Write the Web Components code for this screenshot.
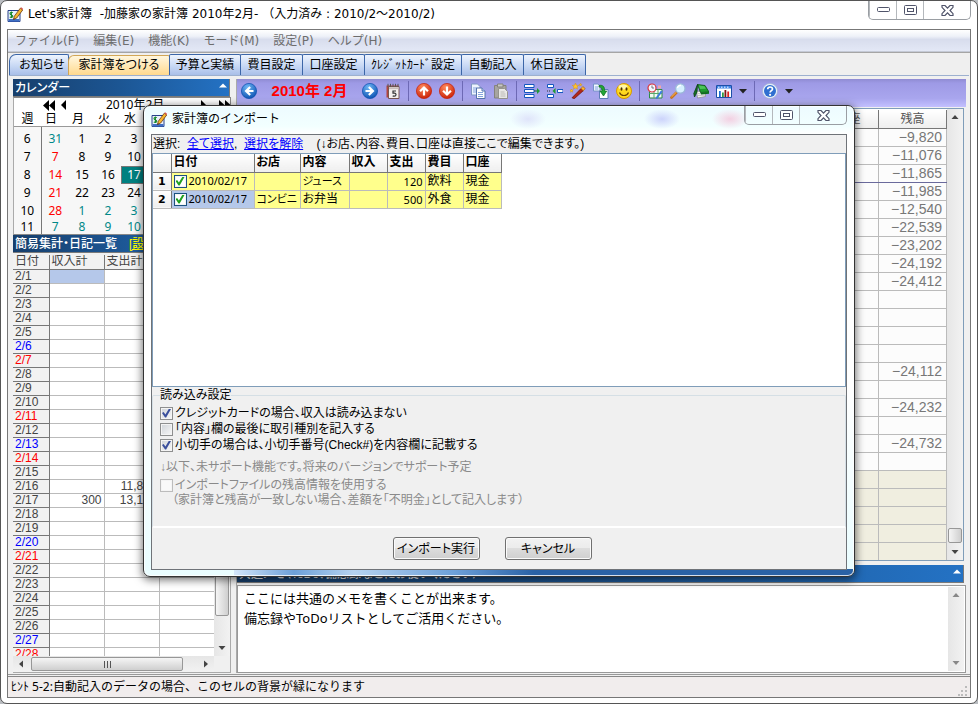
<!DOCTYPE html>
<html lang="ja">
<head>
<meta charset="utf-8">
<title>Let's家計簿</title>
<style>
  html, body { height: 100%; }
  body {
    margin: 0;
    background: #b9bcc0;
    --ui: "DejaVu Sans", "Noto Sans CJK JP", sans-serif;
    --gothic: "Liberation Sans", "Noto Sans CJK JP", sans-serif;
    --num: "Noto Sans", "Noto Sans CJK JP", sans-serif;
    font: 12px/16px var(--gothic);
    color: #000;
    overflow: hidden;
  }
</style>
</head>
<body>
<app-window></app-window>
<script>
const define = (name, html, after) => {
  const t = document.createElement('template');
  t.innerHTML = `<style>*{box-sizing:border-box}button{font:inherit;color:inherit;border:0;padding:0;margin:0;background:none}:host{box-sizing:border-box}</style>` + html;
  customElements.define(name, class extends HTMLElement {
    constructor() {
      super();
      this.attachShadow({ mode: 'open' }).append(t.content.cloneNode(true));
    }
    connectedCallback() { if (after) after(this, this.shadowRoot); }
  });
};

/* ---------- icons ---------- */
const disc = (id, a, b, arrow) => `<defs><radialGradient id="${id}" cx=".4" cy=".25" r=".8"><stop offset="0" stop-color="${a}"/><stop offset="1" stop-color="${b}"/></radialGradient></defs><circle cx="8" cy="8" r="7.6" fill="url(#${id})" stroke="${b}" stroke-width=".7"/><path d="${arrow}" fill="#fff"/>`;
const ICONS = {
  app: `<path d="M1 3.5h12v11H1z" fill="#e9f1fb" stroke="#27408b"/><path d="M1.500 12h11v2.500h-11z" fill="#3f6fc4"/><path d="M5.800 5.700C5 4.900 3 5.200 3 6.600c0 1.600 2.800 1 2.800 2.700 0 1.300-2.100 1.500-3 .600M4.400 4.500v6.500" fill="none" stroke="#168a2c" stroke-width="1.100"/><path d="M6.500 12.500l.8-3.300 6-8 2.400 1.800-6 8z" fill="#f7b52e" stroke="#6b3a10" stroke-width=".8"/><path d="M13.300 1.200l.8-.9 2 1.500-.5 1.200z" fill="#d9534a"/><path d="M6.500 12.500l.3-1.300 1 .7z" fill="#222"/>`,
  left: disc('a', '#6fb7f5', '#0a4fb0', 'M8.400 3.300L3.500 8l4.900 4.700 1.500-1.500L7.800 9.100h4.700V6.900H7.800l2.100-2.100z'),
  right: disc('b', '#6fb7f5', '#0a4fb0', 'M7.600 3.300L12.500 8l-4.900 4.700-1.500-1.500 2.100-2.100H3.500V6.900h4.700L6.100 4.800z'),
  up: disc('c', '#ff8a5c', '#c81e06', 'M3.300 7.600L8 2.900l4.700 4.700-1.500 1.500-2.100-2.100v5.500H6.900V7L4.800 9.100z'),
  down: disc('d', '#ff8a5c', '#c81e06', 'M3.300 8.400L8 13.100l4.700-4.700-1.500-1.500L9.100 9V3.500H6.900V9L4.800 6.900z'),
  cal: `<path d="M1.500 2.500h12v12h-12z" fill="#b3453c"/><path d="M3.500 3.500h10.500v12H3.500z" fill="#f4f0ee" stroke="#7a5650"/><path d="M4 4.200h9.500v2H4z" fill="#c8bdb9"/><path d="M3 .8v3M5.500.8v3M8 .8v3M10.500.8v3M13 .8v3" stroke="#555"/><path d="M11 8H8v2.200h1.500c2 0 2 3-.2 3-.8 0-1.200-.2-1.600-.5" fill="none" stroke="#333" stroke-width="1.200"/>`,
  copy: `<path d="M1.500 1h6l2.500 2.500V12H1.500z" fill="#eef4fd" stroke="#7f97c2"/><path d="M3 5h4M3 7h3M3 9h3" stroke="#86a5dd"/><path d="M6.500 5h5.500l3 3v7.500H6.500z" fill="#fff" stroke="#5674ae"/><path d="M12 5v3h3" fill="#c4d6f5" stroke="#5674ae"/><path d="M8 9.500h5M8 11.500h5M8 13.500h5" stroke="#86a5dd"/>`,
  paste: `<path d="M1.500 2.500h11.500v12.500h-11.500z" fill="#a7a5a0" stroke="#85837e"/><path d="M4.500 1h5.500v3H4.500z" fill="#c9c8c5" stroke="#85837e"/><path d="M5.500 5.500h6l3 3v7H5.500z" fill="#e9e8e6" stroke="#96948f"/><path d="M7.500 9h4M7.500 11h5M7.500 13h5" stroke="#bcbab6"/>`,
  rowadd: `<path d="M.5 1.500h9.500v3H.5zM.5 6.500h9.500v3H.5zM.5 11.500h9.500v3H.5z" fill="#fff" stroke="#1557c0"/><path d="M10 8h3" stroke="#176b2a"/><path d="M13 5l3 3-3 3z" fill="#1f9a35"/>`,
  rowdel: `<path d="M.5 1.500h6v3h-6zM.5 11.500h6v3h-6z" fill="#fff" stroke="#1557c0"/><path d="M10.500 6.500h5.500v3h-5.500z" fill="#fff" stroke="#1557c0"/><path d="M8.500 5v6L5.500 8z" fill="#1f9a35"/><path d="M0 8h4" stroke="#333" stroke-dasharray="1 1"/>`,
  wand: `<path d="M2 14.800L11 5.500l2.300 2.200-9 8z" fill="#b3271a" stroke="#6b1208" stroke-width=".7"/><path d="M11 5.500l1.800-2 2.400 2-1.900 2.200z" fill="#ffb52b" stroke="#a35800" stroke-width=".6"/><path d="M5.500 0l.9 2.200 2.300.2-1.700 1.500.5 2.300-2-1.200-2 1.200.5-2.300L2.300 2.400l2.300-.2zM1.500 6l.5 1.100 1.200.1-.9.800.3 1.200-1.100-.6-1 .6.200-1.200-.8-.8 1.100-.1zM10.500.3l.4 1 1 .1-.7.700.2 1-.9-.5-.9.500.2-1-.7-.7 1-.1z" fill="#ffc629" stroke="#d68700" stroke-width=".4"/>`,
  imp: `<path d="M.5 1h4.500l2 2v5H.5z" fill="#f3f8ff" stroke="#7794c8"/><path d="M1.800 4h3.500M1.800 6h3.500" stroke="#7ca0df"/><path d="M8 6.500h7v9H6.500V8z" fill="#fff" stroke="#5f7fb8"/><path d="M6 2.500c4-1 6 1.500 5.500 5.500h2.200L10.500 13 7 8h2c.3-2.500-.8-4-3-4z" fill="#23a536" stroke="#0c6b1b" stroke-width=".7"/>`,
  smile: `<circle cx="8" cy="8" r="7.500" fill="#ffd91f" stroke="#d79a00"/><ellipse cx="7" cy="4" rx="4.500" ry="2.500" fill="#fff6a8"/><ellipse cx="5.500" cy="6" rx="1" ry="1.800" fill="#4a3000"/><ellipse cx="10.500" cy="6" rx="1" ry="1.800" fill="#4a3000"/><path d="M3.500 9.500c1.500 4 7.500 4 9 0" fill="none" stroke="#6b4200" stroke-width="1.200"/>`,
  find: `<path d="M2.500 6.500h12.500v8.500H2.500z" fill="#f2fbf2" stroke="#2e8b46"/><path d="M2.500 10.500h12.500M7 6.500V15M11 6.500V15" stroke="#58a86c"/><path d="M8.500 15L14 7.500l1.500 1.200L10 16z" fill="#3b7be0"/><circle cx="5" cy="5" r="4" fill="#f4f8ff" stroke="#d8343c" stroke-width="1.200"/><path d="M5 2.500V5h2" stroke="#777" fill="none"/><path d="M11 2.500h3v3h-3z" fill="#f3a6a6"/>`,
  lens: `<path d="M1.500 14.500L6.500 9.500" stroke="#c8731a" stroke-width="2.600" stroke-linecap="round"/><path d="M1.500 13.900L6.500 9" stroke="#ffc06b" stroke-width=".9"/><circle cx="10.300" cy="5.500" r="4.700" fill="#d6f0ff" stroke="#9bb8d8" stroke-width="1.300"/><path d="M7.500 5a3 3 0 013.500-2.500" stroke="#fff" stroke-width="1.400" fill="none"/>`,
  book: `<path d="M3.500 8l1 7 8-1.500V9z" fill="#f3f3f3" stroke="#888" stroke-width=".7"/><path d="M4.500 10.500l7.500.5M4.700 12.500l7.300-.2" stroke="#aaa" stroke-width=".6"/><path d="M4.500 1.500L12 2.500l4 6.500-8.500.5z" fill="#1e9a2f" stroke="#0b4f16" stroke-width=".8"/><path d="M6 2.500l5.500.8 1.500 2.400-6 .3z" fill="#4cc45a"/><path d="M4.500 1.500L.8 10.500l.7 3.500L4 9z" fill="#157324" stroke="#0b3f12" stroke-width=".8"/><path d="M7.500 9.500L16 9v1.800l-8 .7z" fill="#0e6e1d"/>`,
  chart: `<path d="M.5 2.500h15v12H.5z" fill="#fff" stroke="#1d4fa8"/><path d="M1 3h14v2.500H1z" fill="#3d83e6"/><path d="M2 4.200h1.500M5 4.200h1.500M8 4.200h1.500M11 4.200h1.500" stroke="#fff"/><path d="M3 8h1.800v6H3z" fill="#1d6fd6"/><path d="M6 9.500h1.800V14H6z" fill="#2f9b44"/><path d="M8.500 7h1.800v7H8.500z" fill="#7a1414"/><path d="M11.300 8.500h1.800V14h-1.800z" fill="#d22"/>`,
  help: `<circle cx="8" cy="8" r="7.600" fill="#e8eef9" stroke="#9fb2d6" stroke-width=".7"/><circle cx="8" cy="8" r="6" fill="#2f6fd0"/><path d="M5.700 6.300C5.700 3.300 10.500 3.300 10.500 6c0 1.700-2.400 1.700-2.400 3.600" fill="none" stroke="#fff" stroke-width="1.700"/><circle cx="8.100" cy="11.800" r="1.100" fill="#fff"/>`,
};
define('ui-icon', `<style>:host{display:block;width:16px;height:16px;flex:none}svg{display:block;width:100%;height:100%}</style><svg viewBox="0 0 16 16" aria-hidden="true"></svg>`,
  (el, r) => { r.querySelector('svg').innerHTML = ICONS[el.getAttribute('name')]; });

/* ---------- window chrome ---------- */
define('caption-buttons', `<style>
  :host{display:flex;height:19px;border:1px solid #9a9ea3;border-top:0;border-radius:0 0 5px 5px;overflow:hidden}
  button{width:27px;display:grid;place-items:center;border-left:1px solid #b4b8bc}
  button:first-child{border-left:0}button:last-child{width:47px}
  svg{display:block}
</style>
<button aria-label="最小化"><svg width="13" height="6"><rect x=".5" y=".5" width="12" height="4" rx="1" fill="#fff" stroke="#50546a"/></svg></button>
<button aria-label="最大化"><svg width="13" height="10"><rect x=".5" y=".5" width="12" height="9" rx="1" fill="#fff" stroke="#50546a"/><rect x="3.500" y="3.500" width="6" height="3" fill="#fff" stroke="#50546a"/></svg></button>
<button aria-label="閉じる"><svg width="13" height="11"><path d="M1 .5h3l2.500 2.700L9 .5h3v1.800L9 5.500l3 3.200v1.800H9L6.500 7.800 4 10.500H1V8.700l3-3.200-3-3.200z" fill="#fff" stroke="#50546a" stroke-width="1.200"/></svg></button>`);

define('title-bar', `<style>
  :host{display:flex;align-items:flex-start;font-family:var(--ui);height:28px}
  ui-icon{margin-top:6px}
  span{flex:1;padding:4px 0 0 5px;white-space:pre;line-height:18px}
</style><ui-icon name="app"></ui-icon><span><slot></slot></span><caption-buttons></caption-buttons>`);

define('menu-bar', `<style>
  :host{display:block;background:linear-gradient(#fff,#eef1f8 30%,#d8dded 45%,#e3e8f6);border-bottom:1px solid #c5cad6}
  nav{display:flex;gap:14px;height:21px;padding:0 7px;color:#6d6d6d;font-family:var(--ui);line-height:20px}
</style><nav><button>ファイル(F)</button><button>編集(E)</button><button>機能(K)</button><button>モード(M)</button><button>設定(P)</button><button>ヘルプ(H)</button></nav>`);

define('tab-strip', `<style>
  :host{display:block;background:#efefef;border-top:1px solid #a5a5a5;padding:1px 1px 0}
  div{display:flex;align-items:flex-end;height:22px;border-bottom:1px solid #9db0cf}
  button{height:21px;border:1px solid #3c66a8;border-bottom:0;margin-right:-1px;border-radius:2px 2px 0 0;
    background:linear-gradient(#eef4fe,#c4d5f3 60%,#a9bfe8);white-space:nowrap;font-feature-settings:"palt";text-align:center;overflow:hidden;line-height:19px}
  button:first-child{border-top-left-radius:7px;padding-left:6px}
  button[aria-selected=true]{background:linear-gradient(#fff6de,#ffe5ae 60%,#ffd98e);border-color:#d2a656;height:20px;border-top-left-radius:6px}
</style><div role="tablist"></div>`, (el, r) => {
  r.querySelector('div').innerHTML = [['お知らせ', 60], ['家計簿をつける', 102], ['予算と実績', 72], ['費目設定', 63], ['口座設定', 63], ['ｸﾚｼﾞｯﾄｶｰﾄﾞ設定', 98], ['自動記入', 63], ['休日設定', 63]]
    .map(([t, w], i) => `<button role="tab" aria-selected="${i === 1}" style="width:${w}px">${t}</button>`).join('');
});

define('section-head', `<style>
  :host{display:flex;align-items:center;height:18px;flex:none;padding:0 2px;color:#fff;background:linear-gradient(90deg,#173f6c,#1c5694 50%,#2472c4);border:1px solid #7a7a7a;border-width:0 1px 1px 0;font-weight:500;white-space:nowrap;overflow:hidden;line-height:16px;font-feature-settings:"palt"}
  span{flex:1}
  ::slotted(a){color:#ff0;margin-left:12px}
  svg{display:block;margin-top:-5px}
</style><span><slot></slot></span><svg width="8" height="5"><path d="M0 4.500L4 .5l4 4z" fill="#fff"/></svg>`);

define('scroll-bar', `<style>
  :host{display:flex;flex-direction:column;width:16px;flex:none;background:linear-gradient(90deg,#e6e6e6,#f2f2f2);color:#444}
  :host([dir-x]){flex-direction:row;width:auto;height:16px;background:linear-gradient(#e6e6e6,#f2f2f2)}
  :host([dim]){color:#888}
  button{flex:none;width:16px;height:16px;display:grid;place-items:center}
  i{flex:1}
  b{flex:none;border:1px solid #979797;border-radius:2px;background:linear-gradient(90deg,#f5f5f5,#e2e2e2 50%,#cfcfcf);margin:0 1px;display:none;place-items:center}
  :host([dir-x]) b{background:linear-gradient(#f5f5f5,#e2e2e2 50%,#cfcfcf);margin:1px 0}
  .g{display:none}:host([dir-x]) .g{display:block}
</style><button aria-label="前へ"><svg width="8" height="8"></svg></button><i id="p"></i><b><svg class="g" width="9" height="7"><path d="M1.500 0v7M4.500 0v7M7.500 0v7" stroke="#555"/></svg></b><i id="q"></i><button aria-label="次へ"><svg width="8" height="8"></svg></button>`,
  (el, r) => {
    const x = el.hasAttribute('dir-x'), s = r.querySelectorAll('button svg'), b = r.querySelector('b');
    s[0].innerHTML = `<path d="${x ? 'M6 .5v7L2 4z' : 'M.5 6h7L4 2z'}" fill="currentColor"/>`;
    s[1].innerHTML = `<path d="${x ? 'M2 .5v7L6 4z' : 'M.5 2h7L4 6z'}" fill="currentColor"/>`;
    const n = el.getAttribute('thumb');
    if (n) { b.style.display = 'grid'; b.style[x ? 'width' : 'height'] = n + 'px'; r.querySelector('#p').style.flex = el.getAttribute('before'); r.querySelector('#q').style.flex = el.getAttribute('after'); }
  });

/* ---------- left column ---------- */
define('month-calendar', `<style>
  :host{display:block;height:138px;flex:none;background:#f7f7f7;border:1px solid #888;border-left-color:#aaa;overflow:hidden;font:12px/14px var(--num)}
  .nav{display:grid;grid-template-columns:28px 18px 16px 1fr 18px 12px;height:14px;align-items:center;background:#fff}
  .nav span{padding-left:30px;line-height:14px}
  .nav button{height:11px}
  .nav svg{display:block}
  table{border-collapse:collapse;table-layout:fixed;width:210px}
  thead{background:#fff}
  th{font-weight:400;height:14px;border-bottom:1px solid #999;padding:0 8px 0 0;line-height:13px;text-align:center}
  th:first-child{padding-right:0}
  td{height:18px;padding:0;text-align:center}
  td:first-child{border-right:1px solid #777}
  tbody tr:first-child td{padding-top:4px;height:22px}
  tbody tr:last-child td{height:14px}
  .o{color:#088}.s{color:#f00}.t{background:#008080;color:#fff;outline:1px solid #777;outline-offset:-1px}
</style>
<div class="nav"><i></i><button aria-label="前年"><svg width="14" height="11"><path d="M7 0v11L1 5.500zM13 0v11L7 5.500z"/></svg></button><button aria-label="前月"><svg width="8" height="10"><path d="M6 0v10L1 5z"/></svg></button><span>2010年2月</span><button aria-label="翌月"><svg width="8" height="10"><path d="M1 0v10l5-5z"/></svg></button><button aria-label="翌年"><svg width="14" height="11"><path d="M1 0v11l6-5.500zM7 0v11l6-5.500z"/></svg></button></div>
<table><colgroup><col style="width:27px"><col style="width:28px"><col style="width:26px"><col style="width:26px"><col style="width:26px"><col></colgroup><thead><tr><th>週<th>日<th>月<th>火<th>水<th></th></tr></thead><tbody></tbody></table>`,
  (el, r) => {
    const rows = [[6, '31o', 1, 2, 3], [7, '7s', 8, 9, 10], [8, '14s', 15, 16, '17t'], [9, '21s', 22, 23, 24], [10, '28s', '1o', '2o', '3o'], [11, '7o', '8o', '9o', '10o']];
    r.querySelector('tbody').innerHTML = rows.map(a => '<tr>' + a.map(v => { v = String(v); const m = v.match(/[a-z]/); return `<td class="${m ? m[0] : ''}">${parseInt(v)}</td>`; }).join('') + '<td></td></tr>').join('');
  });

define('day-list', `<style>
  :host{display:grid;grid-template:minmax(0,1fr) 16px/minmax(0,1fr) 16px;flex:1;min-height:0;border:1px solid #aaa;border-width:0 1px 1px 0;background:#f0f0f0}
  .v{overflow:hidden;min-height:0}
  table{border-collapse:collapse;table-layout:fixed;width:100%;color:#444;background:#fff;line-height:13px}
  th,td{height:14px;padding:0 2px;border-right:1px solid #bbb;border-bottom:1px solid #bbb;overflow:hidden;white-space:nowrap}
  th{font-weight:400;text-align:left;background:#f2f2f2;border-color:#777}
  td{text-align:right}td:last-child{border-right:0}
  .sa{color:#00f}.su{color:#f00}.sel{background:#b5c8ea}
</style><div class="v"><table><colgroup><col style="width:36px"><col style="width:55px"><col style="width:55px"><col></colgroup><thead><tr><th>日付<th>収入計<th>支出計<th></th></tr></thead><tbody></tbody></table></div>
<scroll-bar thumb="110" before="246" after="25"></scroll-bar><scroll-bar dir-x thumb="152" before="2" after="14"></scroll-bar>`,
  (el, r) => {
    let h = '';
    for (let d = 1; d <= 28; d++) {
      const c = [6, 13, 20, 27].includes(d) ? 'sa' : [7, 11, 14, 21, 28].includes(d) ? 'su' : '';
      h += `<tr><th class="${c}">2/${d}</th><td class="${d === 1 ? 'sel' : ''}">${d === 17 ? '300' : ''}</td><td>${d === 16 ? '11,865' : d === 17 ? '13,120' : ''}</td><td></td></tr>`;
    }
    r.querySelector('tbody').innerHTML = h;
  });

/* ---------- right column ---------- */
define('tool-bar', `<style>
  :host{display:flex;align-items:center;gap:7px;height:28px;flex:none;padding:0 4px 4px;background:linear-gradient(#8f8bd2,#9e9ae6 15%,#a9a6ee 70%,#c3c0ff);overflow:hidden}
  i{width:1px;height:20px;background:#6d69b5}
  b{width:91px;text-align:center;color:#f00;font-size:15px;white-space:pre}
  .a{width:8px}.a svg{display:block}
</style>`, (el, r) => {
  const arrow = '<button class="a" aria-label="メニュー"><svg width="8" height="5"><path d="M0 0h8L4 4.500z" fill="#222"/></svg></button>';
  const names = { left: '前月', right: '翌月', cal: '今日', up: '上へ', down: '下へ', copy: 'コピー', paste: '貼り付け', rowadd: '行挿入', rowdel: '行削除', wand: '自動入力', imp: 'インポート', smile: '顔', find: '検索', lens: '拡大', book: '辞書', chart: 'グラフ', help: 'ヘルプ' };
  r.innerHTML += 'left T right cal | up down | copy paste | rowadd rowdel wand imp smile | find lens book chart v | help v'.split(' ').map(n =>
    n === '|' ? '<i></i>' : n === 'v' ? arrow : n === 'T' ? '<b>2010年 2月</b>' : `<button aria-label="${names[n]}"><ui-icon name="${n}"></ui-icon></button>`).join('');
});

define('ledger-grid', `<style>
  :host{display:flex;flex:1;min-height:0;margin:1px 2px 4px 0;border:1px solid #7f9db9;background:#fff;overflow:hidden}
  .v{flex:1;overflow:hidden;padding-top:1px}
  table{border-collapse:collapse;table-layout:fixed;width:100%;color:#777;line-height:16px}
  th,td{height:18px;padding:0 4px;border-right:1px solid #bbb;border-bottom:1px solid #bbb;white-space:nowrap}
  th{font-weight:400;border-color:#777;background:linear-gradient(#fff,#eee);color:#555}
  td{text-align:right;font-size:14px;background:#fcfcfc}
  .m td{border-bottom-color:#6a6a9c}.e td{background:#f0eee0}
</style><div class="v"><table><colgroup><col><col style="width:60px"><col style="width:68px"></colgroup><thead><tr><th><th>口座<th>残高</th></tr></thead><tbody></tbody></table></div><scroll-bar thumb="15" before="406" after="1"></scroll-bar>`,
  (el, r) => {
    const v = { 0: '9,820', 1: '11,076', 2: '11,865', 3: '11,985', 4: '12,540', 5: '22,539', 6: '23,202', 7: '24,192', 8: '24,412', 13: '24,112', 15: '24,232', 17: '24,732' };
    let h = '';
    for (let i = 0; i < 24; i++) h += `<tr class="${i > 18 ? 'e' : i === 2 ? 'm' : ''}"><td></td><td></td><td>${v[i] ? '−' + v[i] : ''}</td></tr>`;
    r.querySelector('tbody').innerHTML = h;
  });

define('memo-box', `<style>
  :host{display:flex;flex:none;height:88px;margin-top:2px;border:1px solid #999;background:#fff;padding:1px}
  textarea{flex:1;min-width:0;border:0;outline:0;resize:none;padding:1px 5px;font:13px/20px var(--num);background:#fff;color:#000;overflow:hidden}
</style><textarea aria-label="共通メモ">ここには共通のメモを書くことが出来ます。
備忘録やToDoリストとしてご活用ください。</textarea><scroll-bar dim></scroll-bar>`);

/* ---------- import dialog ---------- */
define('check-line', `<style>
  :host{display:block;color:#000;font-feature-settings:"palt"}
  :host([off]){color:#8a8a8a}
  label{display:flex;gap:2px;align-items:center;line-height:16px;white-space:nowrap}
  input{appearance:none;width:13px;height:13px;margin:0;border:1px solid #8e8f8f;background:linear-gradient(135deg,#cfd3d8,#f8f8f8);box-shadow:inset 0 0 0 1px #f4f4f4;display:grid;place-items:center;flex:none}
  :host([off]) input{background:#f9f9f9;border-color:#bcbcbc}
  input:checked::before{content:"";width:9px;height:9px;background:#3a4f9c;clip-path:polygon(0 50%,18% 40%,38% 66%,78% 0,100% 6%,46% 100%,34% 100%)}
  :host([green]) input{border-color:#1c5180;background:#fff}
  :host([green]) input::before{background:#21a121!important}
</style><label><input type="checkbox"><span><slot></slot></span></label>`,
  (el, r) => { const i = r.querySelector('input'); i.checked = el.hasAttribute('on'); i.disabled = el.hasAttribute('off'); });

define('import-grid', `<style>
  :host{display:block;height:234px;border:1px solid #7f9db9;background:#fff;overflow:hidden}
  table{border-collapse:collapse;table-layout:fixed;width:348px}
  th,td{height:18px;padding:0 2px;border-right:1px solid #bbb;border-bottom:1px solid #bbb;line-height:17px;white-space:nowrap;overflow:hidden;font-feature-settings:"palt"}
  th{text-align:left;font-weight:700;border-color:#777;background:linear-gradient(#fff,#eee)}
  tbody th{text-align:center;font:700 11px/17px "DejaVu Sans",sans-serif;border-bottom-color:#bbb}
  td{background:#ffff8c}
  .sel{background:#b5c8ea}.r{text-align:right}
  .d,.r{font-family:var(--num)}
  .d,.r,.k{font-size:11px}
</style><table><colgroup><col style="width:18px"><col style="width:83px"><col style="width:46px"><col style="width:49px"><col style="width:38px"><col style="width:38px"><col style="width:38px"><col style="width:38px"></colgroup>
<thead><tr><th><th>日付<th>お店<th>内容<th>収入<th>支出<th>費目<th>口座</th></tr></thead>
<tbody><tr><th>1</th><td class="d"><check-line green on>2010/02/17</check-line></td><td></td><td class="k">ジュース</td><td></td><td class="r">120</td><td>飲料</td><td>現金</td></tr>
<tr><th>2</th><td class="d sel"><check-line green on>2010/02/17</check-line></td><td class="k">コンビニ</td><td>お弁当</td><td></td><td class="r">500</td><td>外食</td><td>現金</td></tr></tbody></table>`);

define('import-dialog', `<style>
  :host{display:block;position:absolute;left:142px;right:122px;top:104px;border:1px solid #333;border-radius:7px;padding:0 7px 6px;
    box-shadow:0 0 0 1px rgba(255,255,255,.8) inset,0 2px 8px 1px rgba(0,0,0,.55);
    background:radial-gradient(ellipse 18px 10px at 384px 13px,#dfe4fa,transparent),radial-gradient(ellipse 18px 10px at 518px 13px,#ccd3fb,transparent),radial-gradient(ellipse 18px 10px at 586px 13px,#f3d0e2,transparent),
      linear-gradient(90deg,#d3e6fa,#6da0d8 60px,#b6d3f0 120px,#6da0d8 220px,#2a62a6 300px) 90px 100%/calc(100% - 91px) 7px no-repeat,
      linear-gradient(#edfbff,#f2ffff 20px,#fff 28px,#fff 60%,#e9fdff)}
  .c{border:1px solid #6f7378;background:#f0f0f0}
  p{margin:0;height:18px;line-height:18px;padding:0 1px;font-feature-settings:"palt";white-space:pre}
  a{color:#00f}
  fieldset{margin:0;border:1px solid #d5dfe5;border-bottom:2px solid #fff;border-radius:2px;padding:2px 7px 0;height:141px;min-width:0}
  legend{padding:0;line-height:16px;font-feature-settings:"palt"}
  .n{color:#8a8a8a;line-height:14px;font-feature-settings:"palt"}
  .n.u{padding:7px 0 3px}.n.w{padding-left:12px}
  .b{display:flex;justify-content:center;gap:25px;padding:9px 14px 9px 0}
  .b button{width:87px;height:23px;border:1px solid #707070;border-radius:3px;box-shadow:inset 0 0 0 1px #fbfbfb;background:linear-gradient(#f2f2f2,#ebebeb 50%,#ddd 50%,#cfcfcf);font-feature-settings:"palt"}
</style><title-bar>家計簿のインポート</title-bar>
<div class="c"><p>選択:  <a href="#all">全て選択</a>,  <a href="#none">選択を解除</a>    (↓お店、内容、費目、口座は直接ここで編集できます。)</p>
<import-grid></import-grid>
<fieldset><legend>読み込み設定</legend>
<check-line on>クレジットカードの場合、収入は読み込まない</check-line>
<check-line>「内容」欄の最後に取引種別を記入する</check-line>
<check-line on>小切手の場合は、小切手番号(Check#)を内容欄に記載する</check-line>
<div class="n u">↓以下、未サポート機能です。将来のバージョンでサポート予定</div>
<check-line off>インポートファイルの残高情報を使用する</check-line>
<div class="n w">（家計簿と残高が一致しない場合、差額を「不明金」として記入します）</div>
</fieldset>
<div class="b"><button>インポート実行</button><button>キャンセル</button></div></div>`);

/* ---------- status bar and whole window ---------- */
define('status-line', `<style>
  :host{display:flex;height:21px;flex:none;background:#f1eded;border-top:1px solid #888;padding:0 3px;align-items:center;font:12px/18px var(--num);margin-top:1px}
  span{flex:1}svg{align-self:flex-end}
</style><span><slot></slot></span><svg width="9" height="11"><path d="M7 0h2v2H7zM3 4h2v2H3zM7 4h2v2H7zM0 8h2v2H0zM3 8h2v2H3zM7 8h2v2H7z" fill="#bbb"/></svg>`);

define('app-window', `<style>
  :host{display:flex;flex-direction:column;position:relative;height:100vh;background:#fff;border:1px solid #555;border-radius:7px;padding:0 6px 5px}
  .client{flex:1;min-height:0;display:flex;flex-direction:column;border:1px solid #777;background:#f0f0f0}
  main{flex:1;min-height:0;display:flex;gap:5px;padding:3px 4px 1px 5px;border-bottom:1px solid #999}
  .l{width:218px;flex:none;display:flex;flex-direction:column}
  .l section-head{width:217px}
  .l day-list{margin-top:2px}
  .r{flex:1;min-width:0;display:flex;flex-direction:column;border-left:1px solid #aaa}
  .r section-head{margin-right:2px}
</style>
<title-bar>Let's家計簿  -加藤家の家計簿 2010年2月- （入力済み : 2010/2～2010/2)</title-bar>
<div class="client"><menu-bar></menu-bar><tab-strip></tab-strip>
<main><div class="l"><section-head>カレンダー</section-head><month-calendar></month-calendar><section-head>簡易集計・日記一覧<a href="#set">[設定]</a></section-head><day-list></day-list></div>
<div class="r"><tool-bar></tool-bar><ledger-grid></ledger-grid><section-head>共通メモ（ToDo、備忘録などにお使いください）</section-head><memo-box></memo-box></div></main>
<status-line>ﾋﾝﾄ 5-2:自動記入のデータの場合、このセルの背景が緑になります</status-line></div>
<import-dialog></import-dialog>`);
</script>
</body>
</html>
